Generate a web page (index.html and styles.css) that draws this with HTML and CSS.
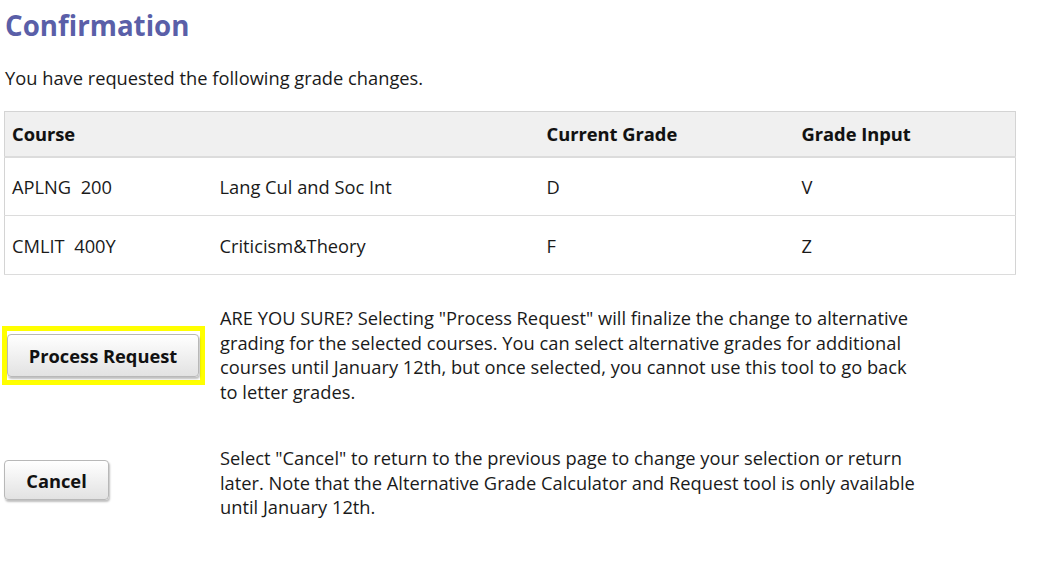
FILE: index.html
```html
<!DOCTYPE html>
<html>
<head>
<meta charset="utf-8">
<link rel="stylesheet" href="styles.css">
</head>
<body>
<div class="page">
  <h1 class="title">Confirmation</h1>
  <p class="intro">You have requested the following grade changes.</p>
  <table class="grades">
    <thead>
      <tr>
        <th class="c-course">Course</th>
        <th class="c-name"></th>
        <th class="c-cur">Current Grade</th>
        <th class="c-in">Grade Input</th>
      </tr>
    </thead>
    <tbody>
      <tr>
        <td>APLNG&nbsp; 200</td>
        <td>Lang Cul and Soc Int</td>
        <td>D</td>
        <td>V</td>
      </tr>
      <tr>
        <td>CMLIT&nbsp; 400Y</td>
        <td>Criticism&amp;Theory</td>
        <td>F</td>
        <td>Z</td>
      </tr>
    </tbody>
  </table>

  <div class="action action-process">
    <div class="btn-cell">
      <div class="focus-ring"><button class="btn btn-process">Process Request</button></div>
    </div>
    <p class="action-text">ARE YOU SURE? Selecting "Process Request" will finalize the change to alternative grading for the selected courses. You can select alternative grades for additional courses until January 12th, but once selected, you cannot use this tool to go back to letter grades.</p>
  </div>

  <div class="action action-cancel">
    <div class="btn-cell">
      <button class="btn btn-cancel">Cancel</button>
    </div>
    <p class="action-text">Select "Cancel" to return to the previous page to change your selection or return later. Note that the Alternative Grade Calculator and Request tool is only available until January 12th.</p>
  </div>
</div>
</body>
</html>
```
FILE: styles.css
```css
html, body {
  margin: 0;
  padding: 0;
  background: #ffffff;
}
body {
  font-family: "Open Sans", "Liberation Sans", sans-serif;
  color: #1a1a1a;
  font-size: 18.3px;
}
.page {
  padding: 6px 0 0 4px;
}
.title {
  margin: 0 0 0 1px;
  font-size: 27.7px;
  line-height: 38px;
  font-weight: 700;
  color: #5a5fa8;
}
.intro {
  margin: 22px 0 0 1px;
  line-height: 24px;
}
.grades {
  margin-top: 21px;
  width: 1012px;
  table-layout: fixed;
  border-collapse: collapse;
  border: 1px solid #d4d4d4;
}
.grades th,
.grades td {
  box-sizing: border-box;
  padding: 0 0 0 7px;
  text-align: left;
}
.grades th {
  background: #f0f0f0;
  font-size: 18.3px;
  font-weight: 700;
  height: 45px;
  border-bottom: 2px solid #dcdcdc;
  color: #111;
  text-shadow: 0 0 1px rgba(0,0,0,0.15);
}
.grades td {
  height: 59px;
  border-bottom: 1px solid #dcdcdc;
  font-size: 18.3px;
}
.c-course { width: 208px; }
.c-name { width: 327px; }
.c-cur { width: 255px; }
.action {
  display: flex;
  align-items: flex-start;
}
.btn-cell {
  width: 216px;
  flex: none;
}
.action-text {
  margin: 0;
  width: 700px;
  line-height: 24.5px;
}
.action-process {
  margin-top: 31px;
  margin-left: -2px;
}
.action-process .btn-cell {
  padding-top: 20px;
  width: 218px;
}
.focus-ring {
  display: inline-block;
  border: 5px solid #ffff00;
  padding: 3px 1px 3px 0;
}
.btn {
  font-family: "Open Sans", "Liberation Sans", sans-serif;
  font-weight: 700;
  font-size: 18.3px;
  color: #111;
  background: linear-gradient(#ffffff, #e2e2e2);
  border: 1px solid #b8b8b8;
  border-radius: 4px;
  box-shadow: 1px 2px 2px rgba(0,0,0,0.25);
  cursor: pointer;
}
.btn-process {
  width: 192px;
  height: 43px;
  padding: 0;
}
.action-cancel {
  margin-top: 42px;
}
.action-cancel .btn-cell {
  padding-top: 14px;
}
.btn-cancel {
  width: 105px;
  height: 40px;
  padding: 0;
}
```
